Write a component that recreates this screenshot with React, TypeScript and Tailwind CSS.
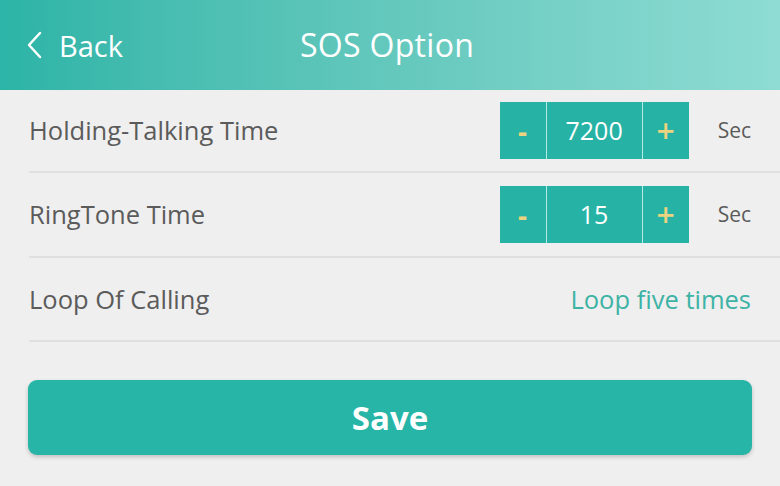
import { useState } from 'react';

type StepperProps = { value: number; onChange: (v: number) => void };

function Stepper({ value, onChange }: StepperProps) {
  return (
    <div className="flex h-[57px] bg-[#26b3a6]">
      <button
        onClick={() => onChange(Math.max(0, value - 1))}
        className="w-[47px] flex items-center justify-center text-[#ecd37f] text-[28px] font-bold border-r border-[#b9ebe4]"
      >
        -
      </button>
      <div className="w-[95px] flex items-center justify-center text-white text-[25px]">
        {value}
      </div>
      <button
        onClick={() => onChange(value + 1)}
        className="w-[47px] flex items-center justify-center text-[#ecd37f] text-[32px] font-semibold border-l border-[#b9ebe4]"
      >
        +
      </button>
    </div>
  );
}

export default function App() {
  const [holding, setHolding] = useState(7200);
  const [ring, setRing] = useState(15);

  return (
    <div
      className="w-[780px] h-[486px] bg-[#efefef] overflow-hidden"
      style={{ fontFamily: '"Open Sans", "Noto Sans", sans-serif' }}
    >
      {/* header */}
      <header className="h-[90px] flex items-center bg-gradient-to-r from-[#2bb4a7] to-[#8edcd3] text-white">
        <button className="flex items-center gap-[15px] pl-[26px] w-[300px]">
          <svg width="18" height="28" viewBox="0 0 18 28">
            <path d="M14 2L3 14l11 12" fill="none" stroke="currentColor" strokeWidth="2.5" strokeLinecap="round" strokeLinejoin="round" />
          </svg>
          <span className="text-[29px] leading-none">Back</span>
        </button>
        <h1 className="text-[32px] leading-none tracking-[0.3px]">SOS Option</h1>
      </header>

      {/* rows */}
      <div className="pl-[29px]">
        <div className="h-[83px] flex items-center border-b-2 border-[#e0e0e0] pr-[29px]">
          <span className="flex-1 text-[25.5px] text-[#5b5b5b]">Holding-Talking Time</span>
          <Stepper value={holding} onChange={setHolding} />
          <span className="ml-[29px] text-[21px] text-[#5b5b5b]">Sec</span>
        </div>
        <div className="h-[85px] flex items-center border-b-2 border-[#e0e0e0] pr-[29px]">
          <span className="flex-1 text-[25.5px] text-[#5b5b5b]">RingTone Time</span>
          <Stepper value={ring} onChange={setRing} />
          <span className="ml-[29px] text-[21px] text-[#5b5b5b]">Sec</span>
        </div>
        <div className="h-[84px] flex items-center border-b-2 border-[#e0e0e0] pr-[29px]">
          <span className="flex-1 text-[25.5px] text-[#5b5b5b]">Loop Of Calling</span>
          <span className="text-[25.5px] text-[#3db3a5]">Loop five times</span>
        </div>
      </div>

      <div className="px-[28px] pt-[38px]">
        <button className="w-full h-[75px] rounded-[9px] bg-[#27b5a8] text-white text-[33px] font-bold shadow-[0_2px_4px_rgba(0,0,0,0.2)]">
          Save
        </button>
      </div>
    </div>
  );
}
